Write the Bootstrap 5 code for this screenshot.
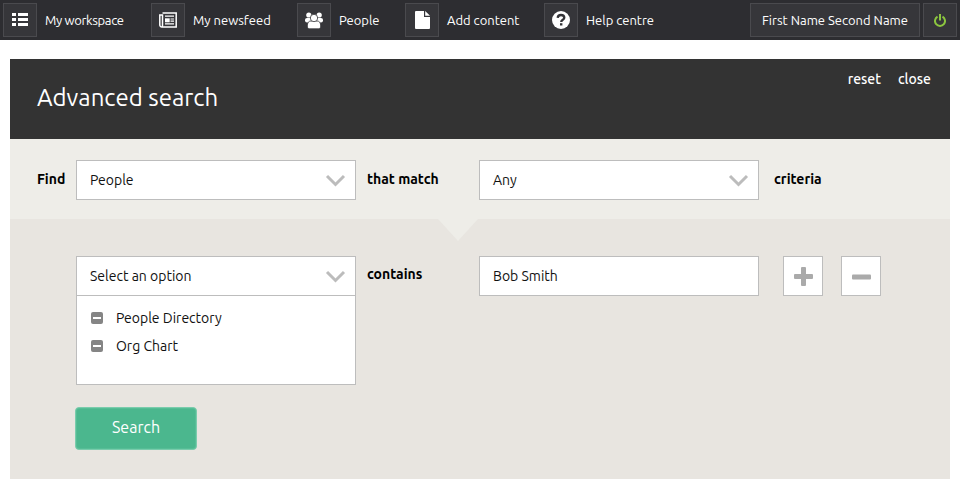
<!DOCTYPE html>
<html lang="en">
<head>
<meta charset="utf-8">
<meta name="viewport" content="width=device-width, initial-scale=1">
<title>Advanced search</title>
<link href="https://cdn.jsdelivr.net/npm/bootstrap@5.3.0/dist/css/bootstrap.min.css" rel="stylesheet">
<style>
body{font-family:Ubuntu,"Noto Sans","Open Sans",sans-serif;font-size:14px;line-height:20px;color:#111;background:#fff;overflow:hidden}
.topbar{height:40px;padding:3px;background:#2d2d31;color:#fff;font-size:13px;white-space:nowrap}
.topmenu{display:grid;grid-template-columns:148px 146px 108px 139px 130px}
.topmenu a,.acts a{color:#fff;text-decoration:none}
.tile{width:34px;height:34px;flex:none;background:#36363a;border:1px solid #4a4a4e}
.userbtn{width:170px;height:34px;background:#36363a;border:1px solid #4a4a4e;border-radius:0;color:#fff;font-size:13px;padding:0;line-height:30px}
.panel{margin:19px 10px 0;height:420px;background:#e8e5e0}
.panel-top{height:80px;background:#333;color:#fff;padding:0 19px 0 27px}
.panel-top h1{font-size:24px;line-height:32px;margin:23px 0 0;font-weight:400}
.acts{margin-top:10px;gap:17px;font-weight:500}
.lines{display:grid;grid-template-columns:39px 280px 123px 280px auto;padding-left:27px;align-items:start}
.match{height:80px;padding-top:21px;background:#eeede8;position:relative}
.match::after{content:"";position:absolute;left:428px;top:80px;border:solid transparent;border-width:22px 20.5px 0;border-top-color:#eeede8}
.rule{padding-top:37px}
.word{font-weight:600;line-height:38px;color:#000;white-space:nowrap}
.rule .word{line-height:36px}
.mid{padding-left:11px}
.field{height:40px;border:1px solid #bdbdbd;border-radius:0;background:#fff;color:#111;font-size:14px;padding:0 9px 0 13px;width:100%;box-shadow:none!important}
.options{border:1px solid #bdbdbd;border-top:0;height:89px;background:#fff;padding:8px 14px;margin:0;list-style:none}
.options li{height:28px;gap:13px}
.sq{width:40px;height:40px;background:#fff;border:1px solid #bdbdbd;border-radius:0;padding:0}
.go{width:122px;height:43px;margin:22px 0 0 65px;padding:0 0 3px;background:#4bb78e;border:1px solid #7accac;box-shadow:inset 0 0 0 1px #56bd96;border-radius:4px;color:#fff;font-size:16px}
.t1{letter-spacing:-.35px}.t2{letter-spacing:-.25px}.t3{letter-spacing:0}
</style>
<script src="https://cdn.jsdelivr.net/npm/bootstrap@5.3.0/dist/js/bootstrap.bundle.min.js"></script>
</head>
<body>
<nav class="topbar d-flex justify-content-between">
  <div class="topmenu">
    <a href="#" class="d-flex align-items-center gap-2"><span class="tile d-flex align-items-center justify-content-center"><svg width="16" height="14" fill="#fff"><path d="M0 0h4v3H0zM6 0h10v3H6zM0 5h4v3H0zM6 5h10v3H6zM0 10h4v3H0zM6 10h10v3H6z"/></svg></span><span class="t1" id="a1">My workspace</span></a>
    <a href="#" class="d-flex align-items-center gap-2"><span class="tile d-flex align-items-center justify-content-center"><svg width="18" height="16" fill="none" stroke="#fff" stroke-width="1.5"><path d="M3.5 1h13.7v14H3a2 2 0 0 1-2.2-2V3h2.7v10.5q0 1.5-1 1.5"/><path d="M6 4.2h9M11.5 7h3.5M11.5 9.2h3.5M6 11.8h9" stroke-width="1.2"/><path d="M6 6.3h4.7v4H6z" fill="#fff" stroke="none"/></svg></span><span id="a2">My newsfeed</span></a>
    <a href="#" class="d-flex align-items-center gap-2"><span class="tile d-flex align-items-center justify-content-center"><svg width="18" height="17" fill="#fff"><circle cx="3.8" cy="3" r="2.6"/><circle cx="14.2" cy="3" r="2.6"/><rect y="6" width="7" height="4.5" rx="2"/><rect x="11" y="6" width="7" height="4.5" rx="2"/><g stroke="#36363a" stroke-width=".8"><path d="M2.3 14c0-3 1.2-5 3.6-5h6.2c2.4 0 3.6 2 3.6 5 0 2-1 2.8-2.5 2.8H4.8C3.3 16.800 2.300 16 2.300 14z"/><circle cx="9" cy="6" r="3.7"/></g></svg></span><span id="a3">People</span></a>
    <a href="#" class="d-flex align-items-center gap-2"><span class="tile d-flex align-items-center justify-content-center"><svg width="15" height="18" fill="#fff"><path d="M1 0h8v6h6v11q0 1-1 1H1q-1 0-1-1V1q0-1 1-1z"/><path d="M10.200 0 15 4.800h-4.800z"/></svg></span><span id="a4">Add content</span></a>
    <a href="#" class="d-flex align-items-center gap-2"><span class="tile d-flex align-items-center justify-content-center"><svg width="18" height="18"><circle cx="9" cy="9" r="9" fill="#fff"/><path d="M5.700 6.900C5.800 4.800 7.200 4 9 4c2 0 3.300 1 3.300 2.700C12.300 8.800 9.200 8.700 9.200 11" fill="none" stroke="#333337" stroke-width="2.300"/><path d="M8 12.200h2.400v2.300H8z" fill="#333337"/></svg></span><span id="a5">Help centre</span></a>
  </div>
  <div class="d-flex" style="gap:3px">
    <button class="btn userbtn"><span id="a6">First Name Second Name</span></button>
    <a href="#" class="tile d-flex align-items-center justify-content-center"><svg width="12" height="13" fill="none" stroke="#8cc63f" stroke-width="2"><path d="M3.500 2.600a5 5 0 1 0 5 0M6 0v6.500"/></svg></a>
  </div>
</nav>

<main class="panel">
  <header class="panel-top d-flex justify-content-between align-items-start">
    <h1><span id="b1">Advanced search</span></h1>
    <div class="acts d-flex"><a href="#" id="b2">reset</a><a href="#" id="b3">close</a></div>
  </header>
  <section class="lines match">
    <span class="word" id="c1">Find</span>
    <button class="btn field d-flex align-items-center justify-content-between"><span id="d1">People</span><svg width="21" height="14" fill="none" stroke="#bcbcbc" stroke-width="3"><path d="M2 3l8.500 8.500L19 3"/></svg></button>
    <span class="word mid"><span id="c2">that match</span></span>
    <button class="btn field d-flex align-items-center justify-content-between"><span id="d2">Any</span><svg width="21" height="14" fill="none" stroke="#bcbcbc" stroke-width="3"><path d="M2 3l8.500 8.500L19 3"/></svg></button>
    <span class="word" style="padding-left:15px"><span id="c3">criteria</span></span>
  </section>
  <section class="lines rule">
    <span></span>
    <div>
      <button class="btn field d-flex align-items-center justify-content-between"><span id="d3">Select an option</span><svg width="21" height="14" fill="none" stroke="#bcbcbc" stroke-width="3"><path d="M2 3l8.500 8.500L19 3"/></svg></button>
      <ul class="options">
        <li class="d-flex align-items-center"><svg width="12" height="12"><rect width="12" height="12" rx="2" fill="#858585"/><path d="M2 5h8v2H2z" fill="#fff"/></svg><span id="e1">People Directory</span></li>
        <li class="d-flex align-items-center"><svg width="12" height="12"><rect width="12" height="12" rx="2" fill="#858585"/><path d="M2 5h8v2H2z" fill="#fff"/></svg><span id="e2">Org Chart</span></li>
      </ul>
    </div>
    <span class="word mid"><span id="c4">contains</span></span>
    <div class="field d-flex align-items-center"><span id="d4">Bob Smith</span></div>
    <div class="d-flex ps-4" style="gap:18px">
      <button class="btn sq d-flex align-items-center justify-content-center" aria-label="Add"><svg width="19" height="19" fill="#aaa"><rect x="7" width="5" height="19" rx="1"/><rect y="7" width="19" height="5" rx="1"/></svg></button>
      <button class="btn sq d-flex align-items-center justify-content-center" aria-label="Remove"><svg width="19" height="19" fill="#aaa"><rect y="7.500" width="19" height="5" rx="1"/></svg></button>
    </div>
  </section>
  <button class="btn go d-block"><span id="f1">Search</span></button>
</main>
</body>
</html>
